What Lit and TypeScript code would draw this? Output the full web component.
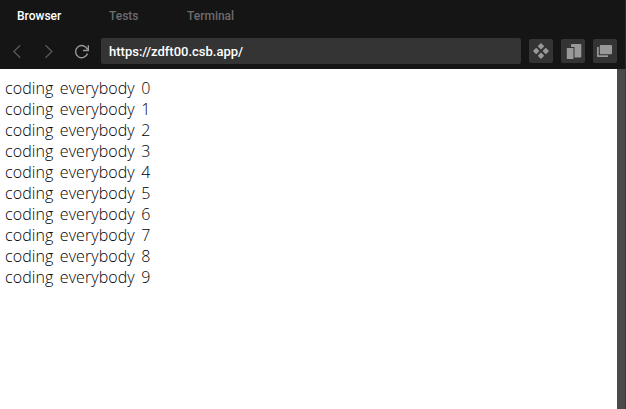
import { LitElement, html, css, svg } from "lit";
import { customElement } from "lit/decorators.js";

@customElement("app-root")
export class AppRoot extends LitElement {
  static styles = css`
    :host {
      display: flex;
      box-sizing: border-box;
      height: 409px;
      width: 626px;
      overflow: hidden;
      flex-direction: column;
      background: #fff;
      font-family: Roboto, sans-serif;
    }
    .head {
      height: 69px;
      flex: none;
      background: #151515;
      border-right: 1px solid #1b2b4e;
    }
    .tabs {
      display: flex;
      height: 32px;
      line-height: 32px;
      padding-left: 17px;
      font-size: 12px;
      font-weight: 500;
      color: #6c6c6c;
    }
    .tab { white-space: nowrap; }
    .first { width: 92px; color: #fff; }
    .second { width: 78px; }
    .bar {
      display: flex;
      align-items: center;
      height: 38px;
      padding-left: 7px;
    }
    .nav { width: 20px; height: 20px; flex: none; margin-right: 12px; }
    .nav.reload { margin-right: 10px; }
    .url {
      width: 412px;
      height: 26px;
      box-sizing: content-box;
      padding-left: 8px;
      line-height: 27px;
      border-radius: 2px;
      background: #343434;
      color: #fff;
      font-size: 13px;
      font-weight: 500;
    }
    .btn {
      width: 24px;
      height: 24px;
      margin-left: 8px;
      border-radius: 2px;
      background: #343434;
    }
    svg { display: block; }
    .body { display: flex; flex: 1; }
    .page {
      flex: 1;
      padding: 9px 0 0 5px;
      font: 300 16px/21px "Open Sans", sans-serif;
      letter-spacing: 0.08px;
      word-spacing: 2.2px;
      color: #000;
    }
    .rail { width: 8px; background: #4a4a4a; border-right: 1px solid #2b3d62; }
  `;

  render() {
    return html`
      <div class="head">
        <div class="tabs">
          <div class="tab first"><span>Browser</span></div>
          <div class="tab second"><span>Tests</span></div>
          <div class="tab"><span>Terminal</span></div>
        </div>
        <div class="bar">
          <svg class="nav" viewBox="0 0 20 20" fill="none" stroke="#5c5c5c" stroke-width="1.200"><path d="M13.200 4.200 6.800 10.500l6.400 6.300" /></svg>
          <svg class="nav" viewBox="0 0 20 20" fill="none" stroke="#5c5c5c" stroke-width="1.200"><path d="M6.500 4.200 12.900 10.500l-6.400 6.300" /></svg>
          <svg class="nav reload" viewBox="0 0 20 20" fill="none" stroke="#999" stroke-width="1.400"><path d="M16.500 12.500A6.100 6.100 0 1 1 16.300 8.300M17.300 4.200v5.300h-5.300" /></svg>
          <div class="url"><span>https://zdft00.csb.app/</span></div>
          <div class="btn"><svg width="24" height="24" fill="#999" stroke="#999" stroke-width="1.600" stroke-linejoin="round">
            ${[[12, 7.2], [7.2, 12], [16.8, 12], [12, 16.8]].map(([x, y]) => svg`<path d="M${x} ${y - 2.2}l2.200 2.200-2.200 2.200-2.200-2.200z" />`)}
          </svg></div>
          <div class="btn"><svg width="24" height="24" fill="#999">
            <path d="M10 5.800q0-.8.8-.8h8.700q.8 0 .8.800v12q0 .8-.8.8h-6V8H10z" /><rect x="5.800" y="9" width="6.700" height="11" rx=".5" />
          </svg></div>
          <div class="btn"><svg width="24" height="24" fill="#999">
            <rect x="6.800" y="6" width="12.200" height="9.200" rx="1" /><path d="M4 8h1.700v8.300H15V18H4.700q-.7 0-.7-.7z" />
          </svg></div>
        </div>
      </div>
      <div class="body">
        <div class="page">
          ${Array.from({ length: 10 }, (_, i) => html`<div><span>coding everybody ${i}</span></div>`)}
        </div>
        <div class="rail"></div>
      </div>
    `;
  }
}
